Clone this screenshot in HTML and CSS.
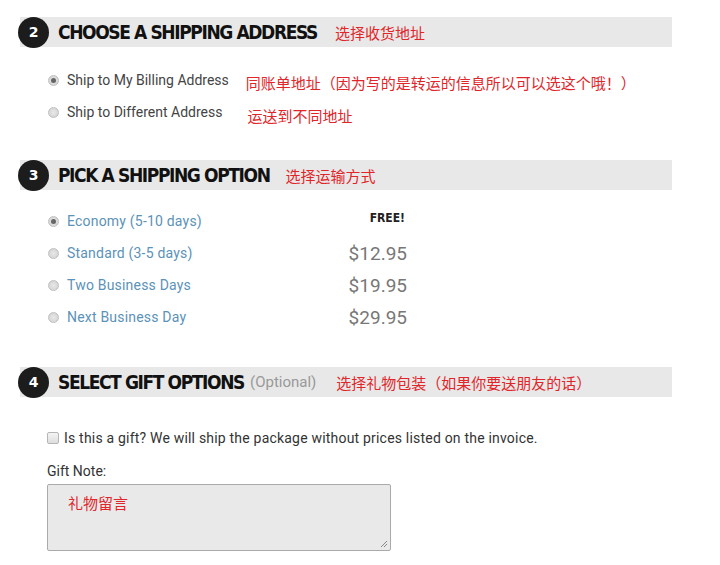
FILE: index.html
```html
<!DOCTYPE html>
<html lang="en">
<head>
<meta charset="utf-8">
<title>Checkout</title>
<link rel="stylesheet" href="styles.css">
</head>
<body>
<div class="page">
  <section class="step">
    <div class="step-head">
      <span class="step-num">2</span>
      <h2 class="step-title">CHOOSE A SHIPPING ADDRESS</h2>
      <span class="note note-head">选择收货地址</span>
    </div>
    <div class="choices">
      <div class="choice">
        <span class="radio checked"></span>
        <span class="choice-label">Ship to My Billing Address</span>
        <span class="note note-row">同账单地址（因为写的是转运的信息所以可以选这个哦！）</span>
      </div>
      <div class="choice">
        <span class="radio"></span>
        <span class="choice-label">Ship to Different Address</span>
        <span class="note note-row2">运送到不同地址</span>
      </div>
    </div>
  </section>

  <section class="step step-3">
    <div class="step-head">
      <span class="step-num">3</span>
      <h2 class="step-title">PICK A SHIPPING OPTION</h2>
      <span class="note note-head3">选择运输方式</span>
    </div>
    <div class="options">
      <div class="option">
        <div class="option-left"><span class="radio checked"></span><span class="option-label">Economy (5-10 days)</span></div>
        <span class="price-free">FREE!</span>
      </div>
      <div class="option">
        <div class="option-left"><span class="radio"></span><span class="option-label">Standard (3-5 days)</span></div>
        <span class="price">$12.95</span>
      </div>
      <div class="option">
        <div class="option-left"><span class="radio"></span><span class="option-label">Two Business Days</span></div>
        <span class="price">$19.95</span>
      </div>
      <div class="option">
        <div class="option-left"><span class="radio"></span><span class="option-label">Next Business Day</span></div>
        <span class="price">$29.95</span>
      </div>
    </div>
  </section>

  <section class="step step-4">
    <div class="step-head">
      <span class="step-num">4</span>
      <h2 class="step-title">SELECT GIFT OPTIONS</h2>
      <span class="optional">(Optional)</span>
      <span class="note note-head4">选择礼物包装（如果你要送朋友的话）</span>
    </div>
    <div class="gift">
      <div class="gift-check"><span class="checkbox"></span><span class="gift-text">Is this a gift? We will ship the package without prices listed on the invoice.</span></div>
      <div class="gift-label">Gift Note:</div>
      <div class="gift-note">
        <span class="note">礼物留言</span>
        <svg class="grip" width="9" height="9" viewBox="0 0 9 9"><path d="M8 2 L2 8 M8 5 L5 8" stroke="#888" stroke-width="1" fill="none"/></svg>
      </div>
    </div>
  </section>
</div>
</body>
</html>
```

FILE: styles.css
```css
* { box-sizing: border-box; }
html, body { margin: 0; padding: 0; background: #fff; }
body { font-family: "Roboto", "Liberation Sans", sans-serif; color: #444; }
.page { padding: 17px 48px 0 18px; width: 720px; }

.step-head {
  display: flex;
  align-items: center;
  height: 30px;
  background: #e8e8e8;
  margin-left: 2px;
  width: 652px;
}
.step-num {
  flex: none;
  width: 31px;
  height: 31px;
  margin-left: -2px;
  border-radius: 50%;
  background: #1c1c1c;
  color: #fff;
  font: bold 14px "DejaVu Sans", sans-serif;
  display: flex;
  align-items: center;
  justify-content: center;
}
.step-title {
  margin: 0 0 0 9px;
  font-family: "DejaVu Sans Condensed", "Liberation Sans", sans-serif;
  font-weight: bold;
  font-size: 19px;
  letter-spacing: -1.4px;
  color: #111;
  white-space: nowrap;
}
.note {
  font-family: "Noto Sans CJK SC", sans-serif;
  font-size: 15px;
  color: #e0262a;
  white-space: nowrap;
}
.note-head { margin-left: 18px; }
.note-head3 { margin-left: 16px; }
.note-head4 { margin-left: 20px; }
.optional { margin-left: 6px; font-size: 15px; color: #999; }

.choices { margin: 17px 0 0 30px; }
.choice { display: flex; align-items: center; height: 32px; }
.radio {
  flex: none;
  width: 11px;
  height: 11px;
  border-radius: 50%;
  border: 1px solid #c0c0c0;
  background: radial-gradient(circle, #e8e8e8, #cfcfcf);
  display: flex;
  align-items: center;
  justify-content: center;
}
.radio.checked::after {
  content: "";
  width: 5px;
  height: 5px;
  border-radius: 50%;
  background: #666;
}
.choice-label { margin-left: 8px; font-size: 14px; color: #444; white-space: nowrap; }
.note-row { margin-left: 17px; margin-top: 4px; }
.note-row2 { margin-left: 25px; margin-top: 6px; }

.step-3 { margin-top: 32px; }
.options { margin: 15px 0 0 30px; width: 359px; }
.option { display: flex; align-items: center; justify-content: space-between; height: 32px; }
.option-left { display: flex; align-items: center; }
.option-label { margin-left: 8px; font-size: 14px; letter-spacing: 0.2px; color: #5b92b8; white-space: nowrap; }
.price { font-size: 19px; color: #777; }
.price-free { font: bold 12px "DejaVu Sans Condensed", "Liberation Sans", sans-serif; color: #222; margin-right: 2px; align-self: flex-start; margin-top: 6px; }

.step-4 { margin-top: 34px; }
.gift { margin: 29px 0 0 29px; }
.gift-check { display: flex; align-items: center; height: 24px; }
.checkbox {
  flex: none;
  width: 12px;
  height: 12px;
  border: 1px solid #b5b5b5;
  border-radius: 2px;
  background: linear-gradient(#f4f4f4, #dedede);
}
.gift-text { margin-left: 5px; font-size: 14px; letter-spacing: 0.2px; color: #333; white-space: nowrap; }
.gift-label { margin-top: 12px; font-size: 14px; line-height: 18px; color: #333; }
.gift-note {
  position: relative;
  margin-top: 4px;
  width: 344px;
  height: 67px;
  background: #e9e9e9;
  border: 1px solid #aaa;
  border-radius: 2px;
  padding: 7px 20px;
}
.grip { position: absolute; right: 2px; bottom: 2px; }
```
